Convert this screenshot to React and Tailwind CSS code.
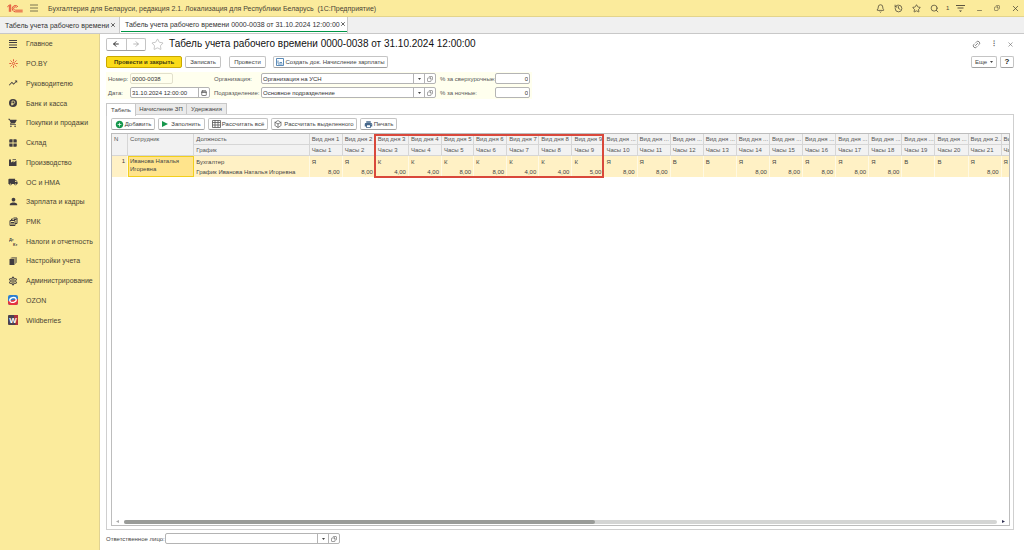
import { Bell, History, Star, Search, Link2, Box, Calendar, Copy, X, Minus, ArrowLeft, ArrowRight } from "lucide-react";
import { MdTrendingUp, MdShoppingCart, MdLocalShipping, MdPerson, MdPrint, MdAddCircle, MdOutlineSettings, MdWindow } from "react-icons/md";

function LinesIcon() {
  return (
    <svg viewBox="0 0 8 8" className="w-2 h-2" stroke="currentColor">
      <path d="M0 0.5h8M0 2.5h8M0 5h8M0 7.5h8" strokeWidth="1.1" />
    </svg>
  );
}

function SunIcon() {
  return (
    <svg viewBox="0 0 16 16" className="w-[9px] h-[9px]" stroke="#e04a30" strokeWidth="1.6" fill="none">
      <circle cx="8" cy="8" r="2" />
      <path d="M8 0.5v3.5M8 12v3.5M0.5 8h3.5M12 8h3.5M2.7 2.7l2.4 2.4M10.9 10.9l2.4 2.4M2.7 13.3l2.4-2.4M10.9 5.1l2.4-2.4" />
    </svg>
  );
}

function CoinIcon() {
  return (
    <svg viewBox="0 0 16 16" className="w-2 h-2">
      <circle cx="8" cy="8" r="8" fill="currentColor" />
      <path d="M6 13V4h3a2.6 2.6 0 0 1 0 5.2H4.5M4.5 11h4.5" stroke="#fbeb9c" strokeWidth="1.5" fill="none" />
    </svg>
  );
}

function FactoryIcon() {
  return (
    <svg viewBox="0 0 16 14" className="w-2 h-[7px]" fill="currentColor">
      <path d="M0 14V1h4v6l5-3v3l6-4v11z" />
      <path d="M7 1.2h7" stroke="currentColor" strokeWidth="1.6" />
    </svg>
  );
}

function RegisterIcon() {
  return (
    <svg viewBox="0 0 18 18" className="w-[9px] h-[9px]" fill="none" stroke="currentColor" strokeWidth="2">
      <path d="M2 7h10v10H2zM5 7V4h4M9 2h7v11h-4M10 5h5" />
      <path d="M4 11h6M4 14h6" />
    </svg>
  );
}

function DebitIcon() {
  return (
    <svg viewBox="0 0 18 18" className="w-[9px] h-[9px]" fill="currentColor" fontFamily="Liberation Sans, sans-serif" fontWeight="bold">
      <text x="0" y="8" fontSize="8">Дт</text>
      <text x="8" y="17" fontSize="8">Кт</text>
    </svg>
  );
}

function BooksIcon() {
  return (
    <svg viewBox="0 0 16 16" className="w-2 h-2" fill="currentColor">
      <path d="M1 4h10v12H1z" />
      <path d="M3 2.5h10v11M5 0.8h10v11" fill="none" stroke="currentColor" strokeWidth="1.1" />
    </svg>
  );
}

function OzonIcon() {
  return (
    <svg viewBox="0 0 20 20" className="w-[10px] h-[10px]">
      <rect width="20" height="20" rx="4" fill="#2c7fd0" />
      <path d="M0 12L20 8v8a4 4 0 0 1-4 4H4a4 4 0 0 1-4-4z" fill="#e5333f" />
      <ellipse cx="10" cy="10" rx="6.5" ry="4.8" fill="none" stroke="#fff" strokeWidth="2.6" transform="rotate(-14 10 10)" />
    </svg>
  );
}

function WildberriesIcon() {
  return (
    <svg viewBox="0 0 20 20" className="w-[10px] h-[10px]">
      <rect width="20" height="20" rx="2" fill="#4b4150" />
      <path d="M12 0h8v20h-5z" fill="#b0303c" />
      <text x="10" y="16" fontSize="16" fontWeight="bold" fontFamily="Liberation Sans, sans-serif" fill="#fff" textAnchor="middle">W</text>
    </svg>
  );
}

function Logo() {
  return (
    <svg viewBox="0 0 48 26" className="w-4 h-[9px]" fill="none" stroke="#e03a2a" strokeWidth="2.6">
      <path d="M1 8l6-5v20M11 23V2H8" />
      <path d="M33 8a9.5 9.5 0 1 0-8 15h22" />
      <path d="M29 10a5 5 0 1 0-4 8h22" />
    </svg>
  );
}

const menu = [
  { label: "Главное", icon: <LinesIcon /> },
  { label: "PO.BY", icon: <SunIcon /> },
  { label: "Руководителю", icon: <MdTrendingUp size={10} /> },
  { label: "Банк и касса", icon: <CoinIcon /> },
  { label: "Покупки и продажи", icon: <MdShoppingCart size={10} /> },
  { label: "Склад", icon: <MdWindow size={10} /> },
  { label: "Производство", icon: <FactoryIcon /> },
  { label: "ОС и НМА", icon: <MdLocalShipping size={10} /> },
  { label: "Зарплата и кадры", icon: <MdPerson size={11} /> },
  { label: "РМК", icon: <RegisterIcon /> },
  { label: "Налоги и отчетность", icon: <DebitIcon /> },
  { label: "Настройки учета", icon: <BooksIcon /> },
  { label: "Администрирование", icon: <MdOutlineSettings size={10} /> },
  { label: "OZON", icon: <OzonIcon /> },
  { label: "Wildberries", icon: <WildberriesIcon /> },
];

const days = [
  ["Я", "8,00"], ["Я", "8,00"], ["К", "4,00"], ["К", "4,00"], ["К", "8,00"], ["К", "8,00"],
  ["К", "4,00"], ["К", "4,00"], ["К", "5,00"], ["Я", "8,00"], ["Я", "8,00"], ["В", ""],
  ["В", ""], ["Я", "8,00"], ["Я", "8,00"], ["Я", "8,00"], ["Я", "8,00"], ["Я", "8,00"],
  ["В", ""], ["В", ""], ["Я", "8,00"], ["Я", "8,00"],
].map(([kind, hours], i) => ({ n: i + 1, kind, hours }));

function dayTitle(n) {
  if (n < 10) return `Вид дня ${n}`;
  return n > 20 ? "Вид дня 2..." : "Вид дня ...";
}

function Btn({ children, className = "" }) {
  return (
    <button className={`flex h-3 shrink-0 items-center justify-center whitespace-nowrap rounded-[2px] border border-[#c4c4c4] border-b-[#a0a0a0] bg-white ${className}`}>
      {children}
    </button>
  );
}

function Caret() {
  return (
    <svg viewBox="0 0 6 4" className="w-[3px] h-[2px]">
      <path d="M0 0h6L3 4z" fill="#444" />
    </svg>
  );
}

// text box with the drop-down and "open" buttons
function Combo({ id, value, className = "" }) {
  return (
    <div className={`flex h-[11px] rounded-[2px] border border-[#b4b4b4] bg-white ${className}`}>
      <input id={id} defaultValue={value} className="min-w-0 flex-1 px-px text-[#333] outline-none" />
      <button aria-label="Выбрать" className="flex w-[11px] items-center justify-center border-l border-[#b4b4b4]"><Caret /></button>
      <button aria-label="Открыть" className="flex w-[11px] items-center justify-center border-l border-[#b4b4b4]"><Copy size={6} className="-scale-x-100" /></button>
    </div>
  );
}

function TopBar() {
  return (
    <header className="flex h-[17px] shrink-0 items-center border-b border-[#e3d48c] bg-[#fbeb9c] pl-[7px] pr-1 text-[7px] text-[#4a4435]">
      <Logo />
      <svg viewBox="0 0 8 8" className="ml-[7px] w-2 h-2" stroke="#5b5540"><path d="M0 1h8M0 4h8M0 7h8" strokeWidth="0.8" /></svg>
      <span className="ml-[10px] whitespace-pre">Бухгалтерия для Беларуси, редакция 2.1. Локализация для Республики Беларусь  (1С:Предприятие)</span>
      <div className="ml-auto flex items-center">
        <button aria-label="Уведомления" className="w-[18px]"><Bell size={9} /></button>
        <button aria-label="История" className="w-[18px]"><History size={9} /></button>
        <button aria-label="Избранное" className="w-[18px]"><Star size={9} /></button>
        <button aria-label="Поиск" className="w-4"><Search size={9} /></button>
        <span className="w-[10px] text-[6px]">1</span>
        <button aria-label="Настройка" className="w-5">
          <svg viewBox="0 0 9 9" className="w-[9px] h-[9px]" stroke="currentColor" strokeWidth="0.9"><path d="M0 1.5h9M1.5 4h6" /><path d="M3 6.5h3L4.5 8z" fill="currentColor" stroke="none" /></svg>
        </button>
        <button aria-label="Свернуть" className="w-[18px]"><Minus size={7} className="mt-1" /></button>
        <button aria-label="Развернуть" className="w-[17px]"><Copy size={6} className="-scale-x-100" /></button>
        <button aria-label="Закрыть"><X size={9} /></button>
      </div>
    </header>
  );
}

function WindowTabs() {
  return (
    <nav className="flex h-[17px] shrink-0 border-b border-[#c8c8c8] bg-[#f0f0f0] text-[7px] text-[#333]">
      <div className="flex w-[120px] items-center justify-between border-r border-[#c8c8c8] pl-[5px] pr-[3px]">
        <button className="whitespace-nowrap">Табель учета рабочего времени</button>
        <button aria-label="Закрыть вкладку"><X size={6} strokeWidth={3} /></button>
      </div>
      <div className="flex w-[228px] border-r border-[#c8c8c8] bg-white px-px pb-px">
        <div className="flex flex-1 items-center justify-between border-b border-[#009646] pl-1 pr-px">
          <button className="whitespace-nowrap">Табель учета рабочего времени 0000-0038 от 31.10.2024 12:00:00</button>
          <button aria-label="Закрыть вкладку"><X size={6} strokeWidth={3} /></button>
        </div>
      </div>
    </nav>
  );
}

function Sidebar() {
  return (
    <aside className="w-[100px] shrink-0 border-r border-[#e0d293] bg-[#fbeb9c]">
      <nav className="flex h-[296px] flex-col text-[7px] text-[#4a4435]">
        {menu.map(item => (
          <a key={item.label} href="#" className="flex flex-1 items-center whitespace-nowrap">
            <span className="flex w-[26px] justify-center text-[#403c40]">{item.icon}</span>
            {item.label}
          </a>
        ))}
      </nav>
    </aside>
  );
}

function Header() {
  return (
    <div className="flex h-5 items-center">
      <div className="flex h-[13px] w-10 rounded-[2px] border border-[#c4c4c4] border-b-[#a0a0a0] text-[#333]">
        <button aria-label="Назад" className="flex flex-1 items-center justify-center border-r border-[#c4c4c4]"><ArrowLeft size={8} strokeWidth={3} /></button>
        <button aria-label="Вперед" className="flex flex-1 items-center justify-center text-[#999]"><ArrowRight size={8} /></button>
      </div>
      <button aria-label="В избранное" className="ml-[5px]"><Star size={13} strokeWidth={1} className="text-[#999]" /></button>
      <h1 className="ml-[5px] whitespace-nowrap text-[10px] text-[#111]">Табель учета рабочего времени 0000-0038 от 31.10.2024 12:00:00</h1>
      <div className="ml-auto flex items-center gap-[9px] text-[#666]">
        <button aria-label="Ссылка"><Link2 size={9} className="-rotate-45" /></button>
        <button aria-label="Меню" className="w-2 text-[8px] font-bold">⁝</button>
        <button aria-label="Закрыть"><X size={7} /></button>
      </div>
    </div>
  );
}

function Commands() {
  return (
    <div className="mt-[2px] flex">
      <button className="h-3 w-[76px] rounded-[2px] border border-[#c9a800] bg-[#fbdb18] font-bold text-[#443c10]">Провести и закрыть</button>
      <Btn className="ml-[3px] w-9">Записать</Btn>
      <Btn className="ml-2 w-[37px]">Провести</Btn>
      <Btn className="ml-[7px] w-[115px] gap-px">
        <svg viewBox="0 0 16 16" className="w-2 h-2" fill="none" stroke="#4b7fb0" strokeWidth="1.8"><path d="M1 1h14v14H1z" /><path d="M4 12h9M4 5v6M7 9h5" /></svg>
        Создать док. Начисление зарплаты
      </Btn>
      <Btn className="ml-auto w-[26px] gap-[3px]">Еще <Caret /></Btn>
      <Btn className="ml-[3px] w-[14px] text-[8px] font-bold text-[#222]">?</Btn>
    </div>
  );
}

function Form() {
  return (
    <div className="mt-1 grid w-[426px] grid-cols-[22px_84px_47px_179px_55px_35px] items-center gap-y-[3px] whitespace-nowrap bg-[#ffffee] py-px pl-[2px] text-[#555]">
      <label htmlFor="number">Номер:</label>
      <input id="number" defaultValue="0000-0038" className="h-[11px] w-[43px] rounded-[2px] border border-[#e2e0cc] px-px text-[#333]" />
      <label htmlFor="org">Организация:</label>
      <Combo id="org" value="Организация на УСН" className="w-[175px]" />
      <label htmlFor="overtime">% за сверхурочные:</label>
      <input id="overtime" defaultValue="0" className="h-[11px] w-[35px] rounded-[2px] border border-[#b4b4b4] bg-white px-px text-right text-[#333]" />

      <label htmlFor="date">Дата:</label>
      <div className="flex h-[11px] w-20 rounded-[2px] border border-[#b4b4b4] bg-white">
        <input id="date" defaultValue="31.10.2024 12:00:00" className="min-w-0 flex-1 px-px text-[#333] outline-none" />
        <button aria-label="Календарь" className="flex w-[11px] items-center justify-center border-l border-[#b4b4b4]"><Calendar size={6} strokeWidth={3} /></button>
      </div>
      <label htmlFor="dept">Подразделение:</label>
      <Combo id="dept" value="Основное подразделение" className="w-[175px]" />
      <label htmlFor="night">% за ночные:</label>
      <input id="night" defaultValue="0" className="h-[11px] w-[35px] rounded-[2px] border border-[#b4b4b4] bg-white px-px text-right text-[#333]" />
    </div>
  );
}

function Toolbar() {
  return (
    <div className="flex gap-[3px]">
      <Btn className="w-11 gap-px"><MdAddCircle size={9} className="text-[#16974c]" />Добавить</Btn>
      <Btn className="w-[47px] gap-[3px]">
        <svg viewBox="0 0 6 6" className="w-[6px] h-[6px]"><path d="M0 0l6 3-6 3z" fill="#16974c" /></svg>
        Заполнить
      </Btn>
      <Btn className="w-[60px] gap-px">
        <svg viewBox="0 0 9 8" className="w-[9px] h-2" fill="none" stroke="#555" strokeWidth="0.8"><path d="M0.5 0.5h8v7h-8zM0.5 2.5h8M0.5 5h8M3 0.5v7M6 0.5v7" /></svg>
        Рассчитать всё
      </Btn>
      <Btn className="w-[86px] gap-[2px]"><Box size={8} />Рассчитать выделенного</Btn>
      <Btn className="w-[37px] gap-px"><MdPrint size={9} className="text-[#46688c]" />Печать</Btn>
    </div>
  );
}

function Timesheet() {
  const th = "h-[11px] overflow-hidden whitespace-nowrap border-r border-b border-[#d6d6d6] px-[2px] text-left align-middle font-normal";
  const td = "overflow-hidden whitespace-nowrap border-r border-[#fff9e3] px-[2px]";
  return (
    <div className="relative mt-[3px] flex min-h-0 flex-1 flex-col overflow-hidden border border-[#bdbdbd]">
      <table className="w-[923px] table-fixed border-separate border-spacing-0 text-[#444]">
        <colgroup>
          <col className="w-4" />
          <col className="w-[66px]" />
          <col className="w-[115px]" />
          {days.map(d => <col key={d.n} className={[5, 7, 9].includes(d.n) ? "w-8" : "w-[33px]"} />)}
        </colgroup>
        <thead className="bg-[#f2f2f2] text-[#555]">
          <tr>
            <th rowSpan={2} className={`${th} pt-[2px] align-top`}>N</th>
            <th rowSpan={2} className={`${th} pt-[2px] align-top`}>Сотрудник</th>
            <th className={th}>Должность</th>
            {days.map(d => <th key={d.n} className={th}>{dayTitle(d.n)}</th>)}
          </tr>
          <tr>
            <th className={th}>График</th>
            {days.map(d => <th key={d.n} className={th}>Часы {d.n}</th>)}
          </tr>
        </thead>
        <tbody className="bg-[#fff1c5]">
          <tr>
            <td rowSpan={2} className={`${td} pt-[2px] text-right align-top`}>1</td>
            <td rowSpan={2} className="border border-[#f2cf1d] bg-[#ffe48c] px-px align-top leading-[8px]">Иванова Наталья Игоревна</td>
            <td className={`${td} h-[11px]`}>Бухгалтер</td>
            {days.map(d => <td key={d.n} className={`${td} h-[11px]`}>{d.kind}</td>)}
          </tr>
          <tr>
            <td className={`${td} h-[10px]`}>График Иванова Наталья Игоревна</td>
            {days.map(d => <td key={d.n} className={`${td} h-[10px] text-right`}>{d.hours}</td>)}
          </tr>
        </tbody>
      </table>
      {/* highlight around days 3-9 */}
      <div className="absolute left-[262px] top-0 h-11 w-[230px] border-2 border-[#d9483b]"></div>
      <div className="mt-auto flex h-[7px] items-center px-1">
        <button aria-label="Влево" className="flex w-2"><svg viewBox="0 0 4 4" className="w-[3px] h-[3px]"><path d="M4 0v4L0 2z" fill="#aaa" /></svg></button>
        <div className="h-1 flex-1 rounded-full bg-[#d4d5d4]">
          <div className="h-1 w-[54%] rounded-full bg-[#999b98]"></div>
        </div>
        <button aria-label="Вправо" className="flex w-2 justify-end"><svg viewBox="0 0 4 4" className="w-[3px] h-[3px]"><path d="M0 0v4l4-2z" fill="#335" /></svg></button>
      </div>
    </div>
  );
}

export default function App() {
  return (
    <div className="flex h-screen flex-col overflow-hidden bg-white font-['Liberation_Sans',Arial,sans-serif] leading-none">
      <TopBar />
      <WindowTabs />
      <div className="flex min-h-0 flex-1">
        <Sidebar />
        <main className="flex min-w-0 flex-1 flex-col pb-[6px] pl-[6px] pr-[10px] text-[6px] text-[#444]">
          <Header />
          <Commands />
          <Form />
          <div className="mt-1 flex h-3 shrink-0">
            <button className="z-10 -mb-px w-[30px] border border-b-0 border-[#c8c8c8] bg-white">Табель</button>
            <button className="w-[51px] border border-l-0 border-[#c8c8c8] bg-[#ebebeb]">Начисление ЗП</button>
            <button className="w-10 border border-l-0 border-[#c8c8c8] bg-[#ebebeb]">Удержания</button>
          </div>
          <section className="-mt-px flex min-h-0 flex-1 flex-col border border-[#cfcfcf] pb-[3px] pl-1 pr-[3px] pt-[3px]">
            <Toolbar />
            <Timesheet />
          </section>
          <div className="mt-[3px] flex items-center">
            <label htmlFor="person" className="w-[59px] whitespace-nowrap">Ответственное лицо:</label>
            <Combo id="person" value="" className="w-[175px]" />
          </div>
        </main>
      </div>
    </div>
  );
}
